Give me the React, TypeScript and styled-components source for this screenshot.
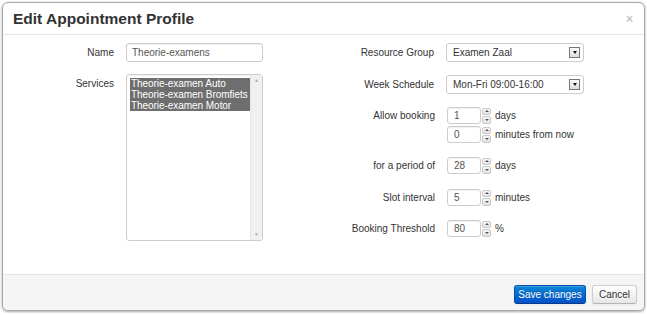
import { FC } from "react";
import styled, { createGlobalStyle } from "styled-components";

const GlobalStyle = createGlobalStyle`
  html, body {
    margin: 0;
    padding: 0;
    background: #fff;
  }
  body {
    font-family: "Liberation Sans", Arial, sans-serif;
    font-size: 10px;
    color: #333;
  }
`;

const Modal = styled.div`
  margin: 2px;
  width: 641px;
  height: 307px;
  border: 1px solid #a8a8a8;
  border-radius: 6px;
  box-shadow: 0 1px 3px rgba(0, 0, 0, 0.35);
  background: #fff;
  display: flex;
  flex-direction: column;
  overflow: hidden;
`;

const Header = styled.div`
  height: 31px;
  flex: none;
  border-bottom: 1px solid #e5e5e5;
  display: flex;
  align-items: center;
  justify-content: space-between;
  padding: 0 11px 0 10px;
`;

const Title = styled.h3`
  margin: 0;
  font-size: 15.5px;
  font-weight: bold;
  color: #333;
`;

const Close = styled.span`
  color: #c4c4c4;
  font-size: 12px;
  font-weight: bold;
  line-height: 1;
`;

const Body = styled.div`
  flex: 1;
  display: flex;
  padding-top: 8px;
`;

const Column = styled.div<{ $width: number }>`
  width: ${(p) => p.$width}px;
  display: flex;
  flex-direction: column;
`;

const Row = styled.div<{ $gap?: number }>`
  display: flex;
  align-items: flex-start;
  margin-bottom: ${(p) => p.$gap ?? 12}px;
`;

const Label = styled.div<{ $width: number; $h?: number }>`
  width: ${(p) => p.$width}px;
  flex: none;
  text-align: right;
  margin-right: 12px;
  line-height: ${(p) => p.$h ?? 19}px;
  color: #333;
`;

const TextInput = styled.div`
  height: 17px;
  width: 130px;
  border: 1px solid #ccc;
  border-radius: 3px;
  box-shadow: inset 0 1px 1px rgba(0, 0, 0, 0.06);
  padding-left: 5px;
  line-height: 17px;
  color: #555;
`;

const ListBox = styled.div`
  width: 135px;
  height: 165px;
  border: 1px solid #ccc;
  border-radius: 3px;
  display: flex;
  box-shadow: inset 0 1px 1px rgba(0, 0, 0, 0.06);
`;

const Options = styled.div`
  flex: 1;
  padding: 3px 0 0 3px;
`;

const Option = styled.div`
  background: #6e6e6e;
  color: #fff;
  line-height: 11px;
  padding-left: 1px;
  width: 119px;
  white-space: nowrap;
  letter-spacing: -0.05px;
`;

const ScrollBar = styled.div`
  width: 11px;
  background: #f0f0f0;
  border-left: 1px solid #e6e6e6;
  display: flex;
  flex-direction: column;
  justify-content: space-between;
  align-items: center;
  padding: 3px 0;
  color: #aaa;
  font-size: 5px;
  line-height: 5px;
`;

const Select = styled.div`
  height: 17px;
  width: 127px;
  border: 1px solid #ccc;
  border-radius: 3px;
  display: flex;
  align-items: center;
  justify-content: space-between;
  padding: 0 3px 0 6px;
  color: #333;
`;

const DropButton = styled.div`
  width: 9px;
  height: 9px;
  border: 1px solid #777;
  background: linear-gradient(#fafafa, #ddd);
  display: flex;
  align-items: center;
  justify-content: center;
`;

const Arrow = styled.div`
  width: 0;
  height: 0;
  border-left: 2.5px solid transparent;
  border-right: 2.5px solid transparent;
  border-top: 3px solid #111;
`;

const SpinGroup = styled.div`
  display: flex;
  flex-direction: column;
  gap: 2px;
`;

const SpinLine = styled.div`
  display: flex;
  align-items: center;
`;

const NumBox = styled.div`
  width: 26px;
  height: 15px;
  border: 1px solid #ccc;
  border-radius: 3px;
  padding-left: 6px;
  line-height: 15px;
  color: #555;
  box-shadow: inset 0 1px 1px rgba(0, 0, 0, 0.06);
`;

const Spinner = styled.div`
  width: 9px;
  height: 16px;
  margin-left: 1px;
  display: flex;
  flex-direction: column;
  gap: 1px;
`;

const SpinBtn = styled.div`
  flex: 1;
  border: 1px solid #c8c8c8;
  border-radius: 2px;
  background: linear-gradient(#f8f8f8, #e2e2e2);
  display: flex;
  align-items: center;
  justify-content: center;
`;

const Tri = styled.div<{ $up?: boolean }>`
  width: 0;
  height: 0;
  border-left: 2px solid transparent;
  border-right: 2px solid transparent;
  ${(p) => (p.$up ? "border-bottom: 2px solid #555;" : "border-top: 2px solid #555;")}
`;

const Unit = styled.span`
  margin-left: 4px;
  color: #333;
`;

const Footer = styled.div`
  height: 36px;
  flex: none;
  border-top: 1px solid #e5e5e5;
  background: #f5f5f5;
  display: flex;
  justify-content: flex-end;
  align-items: flex-start;
  padding: 10px 7px 0 0;
  box-sizing: border-box;
  gap: 6px;
`;

const Button = styled.button<{ $primary?: boolean; $width: number }>`
  font-family: "Liberation Sans", Arial, sans-serif;
  font-size: 10px;
  width: ${(p) => p.$width}px;
  height: 19px;
  padding: 0;
  border-radius: 3px;
  cursor: pointer;
  border: 1px solid ${(p) => (p.$primary ? "#0a4fb0" : "#ccc")};
  border-bottom-color: ${(p) => (p.$primary ? "#063a88" : "#b3b3b3")};
  color: ${(p) => (p.$primary ? "#fff" : "#333")};
  background: ${(p) =>
    p.$primary
      ? "linear-gradient(#0a88d8, #0450c8)"
      : "linear-gradient(#ffffff, #e6e6e6)"};
  text-shadow: ${(p) =>
    p.$primary ? "0 -1px 0 rgba(0,0,0,0.25)" : "0 1px 1px rgba(255,255,255,0.75)"};
  box-shadow: inset 0 1px 0 rgba(255, 255, 255, 0.2), 0 1px 2px rgba(0, 0, 0, 0.05);
`;

const NumField: FC<{ value: string; unit: string }> = ({ value, unit }) => (
  <SpinLine>
    <NumBox>{value}</NumBox>
    <Spinner>
      <SpinBtn>
        <Tri $up />
      </SpinBtn>
      <SpinBtn>
        <Tri />
      </SpinBtn>
    </Spinner>
    <Unit>{unit}</Unit>
  </SpinLine>
);

const services = ["Theorie-examen Auto", "Theorie-examen Bromfiets", "Theorie-examen Motor"];

const App: FC = () => (
  <>
    <GlobalStyle />
    <Modal>
      <Header>
        <Title>Edit Appointment Profile</Title>
        <Close>×</Close>
      </Header>
      <Body>
        <Column $width={280}>
          <Row>
            <Label $width={111}>Name</Label>
            <TextInput>Theorie-examens</TextInput>
          </Row>
          <Row>
            <Label $width={111} $h={20}>Services</Label>
            <ListBox>
              <Options>
                {services.map((s) => (
                  <Option key={s}>{s}</Option>
                ))}
              </Options>
              <ScrollBar>
                <span>▲</span>
                <span>▼</span>
              </ScrollBar>
            </ListBox>
          </Row>
        </Column>
        <Column $width={330}>
          <Row $gap={13}>
            <Label $width={151}>Resource Group</Label>
            <Select>
              Examen Zaal
              <DropButton>
                <Arrow />
              </DropButton>
            </Select>
          </Row>
          <Row $gap={13}>
            <Label $width={151}>Week Schedule</Label>
            <Select>
              Mon-Fri 09:00-16:00
              <DropButton>
                <Arrow />
              </DropButton>
            </Select>
          </Row>
          <Row $gap={14}>
            <Label $width={152} $h={17}>Allow booking</Label>
            <SpinGroup>
              <NumField value="1" unit="days" />
              <NumField value="0" unit="minutes from now" />
            </SpinGroup>
          </Row>
          <Row $gap={15}>
            <Label $width={152} $h={17}>for a period of</Label>
            <NumField value="28" unit="days" />
          </Row>
          <Row $gap={14}>
            <Label $width={152} $h={17}>Slot interval</Label>
            <NumField value="5" unit="minutes" />
          </Row>
          <Row>
            <Label $width={152} $h={17}>Booking Threshold</Label>
            <NumField value="80" unit="%" />
          </Row>
        </Column>
      </Body>
      <Footer>
        <Button $primary $width={72}>Save changes</Button>
        <Button $width={45}>Cancel</Button>
      </Footer>
    </Modal>
  </>
);

export default App;
